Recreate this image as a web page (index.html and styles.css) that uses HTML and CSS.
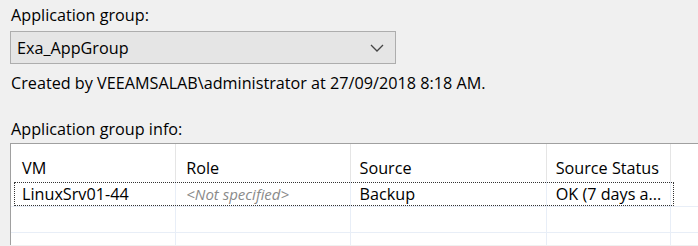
FILE: index.html
```html
<!DOCTYPE html>
<html>
<head>
<meta charset="utf-8">
<link rel="stylesheet" href="styles.css">
</head>
<body>
<div class="page">
  <div class="label first">Application group:</div>
  <div class="combo">
    <span class="combo-text">Exa_AppGroup</span>
    <svg class="chev" width="14" height="8" viewBox="0 0 14 8"><path d="M1 1 L7 7 L13 1" fill="none" stroke="#444" stroke-width="1.3"/></svg>
  </div>
  <div class="created">Created by VEEAMSALAB\administrator at 27/09/2018 8:18 AM.</div>
  <div class="label info">Application group info:</div>
  <div class="grid">
    <div class="row head">
      <div class="cell c1">VM</div>
      <div class="cell c2">Role</div>
      <div class="cell c3">Source</div>
      <div class="cell c4">Source Status</div>
      <div class="cell c5"></div>
    </div>
    <div class="row body sel">
      <div class="cell c1">LinuxSrv01-44</div>
      <div class="cell c2 muted">&lt;Not specified&gt;</div>
      <div class="cell c3">Backup</div>
      <div class="cell c4">OK (7 days a...</div>
      <div class="cell c5"></div>
      <div class="focus"></div>
    </div>
    <div class="row body">
      <div class="cell c1"></div>
      <div class="cell c2"></div>
      <div class="cell c3"></div>
      <div class="cell c4"></div>
      <div class="cell c5"></div>
    </div>
    <div class="row body">
      <div class="cell c1"></div>
      <div class="cell c2"></div>
      <div class="cell c3"></div>
      <div class="cell c4"></div>
      <div class="cell c5"></div>
    </div>
  </div>
</div>
</body>
</html>
```
FILE: styles.css
```css
html, body {
  margin: 0;
  padding: 0;
  background: #f0f0f0;
  overflow: hidden;
}
.page {
  width: 698px;
  height: 246px;
  padding-left: 10px;
  box-sizing: border-box;
  overflow: hidden;
  font-family: "Open Sans", "Noto Sans", sans-serif;
  font-size: 16.2px;
  color: #000;
}
.label {
  padding-left: 1px;
  height: 31px;
  line-height: 30px;
}
.combo {
  width: 386px;
  height: 33px;
  box-sizing: border-box;
  border: 1px solid #adadad;
  background: #e5e5e5;
  display: flex;
  align-items: center;
  justify-content: space-between;
  padding: 0 11px 0 6px;
}
.chev { display: block; }
.created {
  padding-left: 1px;
  height: 35px;
  line-height: 39px;
}
.info {
  margin-top: 15px;
  height: 30px;
  line-height: 30px;
}
.grid {
  margin-top: -1px;
  width: 700px;
  height: 101px;
  overflow: hidden;
  border-top: 1px solid #a0a0a0;
  border-left: 1px solid #a0a0a0;
  background: #fff;
}
.row {
  display: flex;
  position: relative;
}
.cell {
  box-sizing: border-box;
  white-space: nowrap;
  overflow: hidden;
}
.c1 { width: 166px; padding-left: 11px; }
.c2 { width: 175px; padding-left: 10px; }
.c3 { width: 197px; padding-left: 9px; }
.c4 { width: 125px; padding-left: 9px; }
.c5 { width: 40px; }
.head .cell {
  height: 37px;
  line-height: 48px;
  border-right: 1px solid #e5e5e5;
}
.body .cell {
  height: 26px;
  line-height: 26px;
  border-right: 1px solid #e8eef7;
  border-bottom: 1px solid #e8eef7;
}
.sel .cell { height: 25px; line-height: 26px; border-bottom: none; }
.sel { border-bottom: 1px solid #e8eef7; }
.muted {
  color: #8a8a8a;
  font-style: italic;
  font-size: 15px;
}
.focus {
  position: absolute;
  left: 3px;
  top: 1px;
  width: 660px;
  height: 24px;
  border: 1px dotted #333;
  border-radius: 1px;
  box-sizing: border-box;
  pointer-events: none;
}
```
